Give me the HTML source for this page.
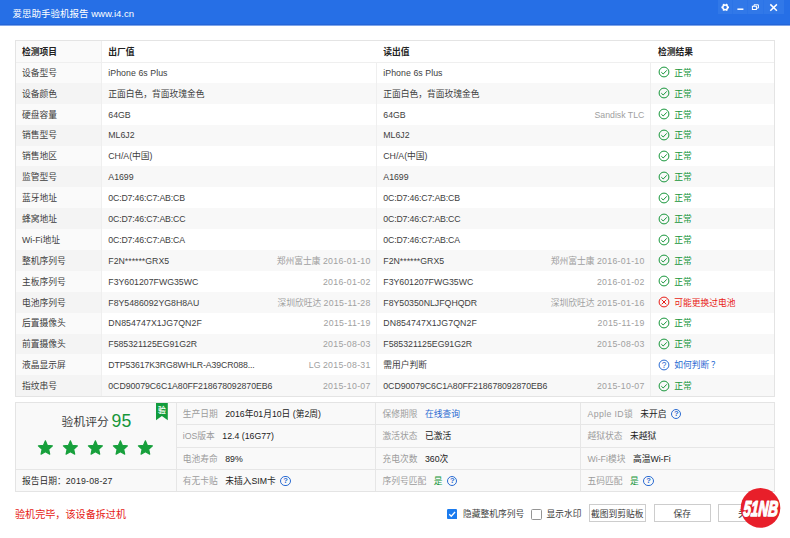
<!DOCTYPE html>
<html lang="zh-CN"><head><meta charset="utf-8"><title>爱思助手验机报告</title><style>
html,body{margin:0;padding:0}
body{width:790px;height:538px;overflow:hidden;background:#fff;position:relative;font-family:"Liberation Sans","Noto Sans CJK SC",sans-serif;font-size:8.75px;color:#3e3e3e}
body>div,body>span,body>svg{position:absolute;display:block;white-space:nowrap}
.b{font-weight:bold;color:#222}
.g{color:#a0a0a0}
.d{letter-spacing:0.3px;margin-right:-0.3px}
.g2{color:#9c9c9c;margin-right:7.5px}
.v{color:#222}
.ttl{color:#fff;font-size:9.5px}
.q{display:inline-block;box-sizing:border-box;width:10.4px;height:10.4px;border:1px solid #2a6bd2;border-radius:50%;color:#2a6bd2;font-style:normal;font-weight:bold;font-size:7.6px;line-height:8.6px;text-align:center;margin-left:4.6px;vertical-align:1.2px}
.btn{box-sizing:border-box;border:1px solid #cdcdcd;background:#fff;text-align:center;color:#333}
</style></head><body>
<div style="left:0.00px;top:0.00px;width:790.00px;height:24.00px;background:#266fe6;"></div>
<div style="left:0.00px;top:24.00px;width:790.00px;height:1.00px;background:#2465d8;"></div>
<div style="left:0.00px;top:25.00px;width:790.00px;height:1.00px;background:#7ea5ea;"></div>
<div style="left:718.00px;top:0.00px;width:66.00px;height:14.00px;background:#3178e8;"></div>
<div style="left:732.00px;top:0.00px;width:1.00px;height:14.00px;background:#2c74e7;"></div>
<div style="left:747.00px;top:0.00px;width:1.00px;height:14.00px;background:#2c74e7;"></div>
<div style="left:763.00px;top:0.00px;width:1.00px;height:14.00px;background:#2c74e7;"></div>
<span class="ttl" style="left:12.60px;top:7.00px;height:14px;line-height:14px;">爱思助手验机报告 www.i4.cn</span>
<svg style="left:718px;top:0;width:66px;height:14px" viewBox="0 0 66 14">
<g fill="none" stroke="#fff" stroke-linecap="butt">
<circle cx="7.2" cy="7.3" r="2.4" stroke-width="1.5"/>
<g stroke-width="1.7" transform="rotate(30 7.2 7.3)"><path d="M7.2 3.5v1.3M7.2 9.8v1.3M3.9 5.4l1.2.7M9.3 8.5l1.2.7M3.9 9.2l1.2-.7M9.3 6.1l1.2-.7"/></g>
<path d="M19.4 9.2h6" stroke-width="1.5"/>
<rect x="34.4" y="6.3" width="4" height="3.2" stroke-width="1"/>
<path d="M36 6.2V4.8h4.4v3.3h-1.9" stroke-width="1"/>
<path d="M52.3 4.4l6.6 6.4M58.9 4.4L52.3 10.8" stroke-width="1.5"/>
</g></svg>
<div style="left:15.30px;top:40.50px;width:759.40px;height:355.70px;background:#fff;"></div>
<div style="left:15.30px;top:40.50px;width:86.30px;height:21.50px;background:#fafafa;"></div>
<div style="left:15.30px;top:62.00px;width:86.30px;height:20.89px;background:#fafafa;"></div>
<div style="left:15.30px;top:82.89px;width:759.40px;height:20.89px;background:#f8f8f8;"></div>
<div style="left:15.30px;top:82.89px;width:86.30px;height:20.89px;background:#f4f4f4;"></div>
<div style="left:15.30px;top:103.78px;width:86.30px;height:20.89px;background:#fafafa;"></div>
<div style="left:15.30px;top:124.66px;width:759.40px;height:20.89px;background:#f8f8f8;"></div>
<div style="left:15.30px;top:124.66px;width:86.30px;height:20.89px;background:#f4f4f4;"></div>
<div style="left:15.30px;top:145.55px;width:86.30px;height:20.89px;background:#fafafa;"></div>
<div style="left:15.30px;top:166.44px;width:759.40px;height:20.89px;background:#f8f8f8;"></div>
<div style="left:15.30px;top:166.44px;width:86.30px;height:20.89px;background:#f4f4f4;"></div>
<div style="left:15.30px;top:187.32px;width:86.30px;height:20.89px;background:#fafafa;"></div>
<div style="left:15.30px;top:208.21px;width:759.40px;height:20.89px;background:#f8f8f8;"></div>
<div style="left:15.30px;top:208.21px;width:86.30px;height:20.89px;background:#f4f4f4;"></div>
<div style="left:15.30px;top:229.10px;width:86.30px;height:20.89px;background:#fafafa;"></div>
<div style="left:15.30px;top:249.99px;width:759.40px;height:20.89px;background:#f8f8f8;"></div>
<div style="left:15.30px;top:249.99px;width:86.30px;height:20.89px;background:#f4f4f4;"></div>
<div style="left:15.30px;top:270.88px;width:86.30px;height:20.89px;background:#fafafa;"></div>
<div style="left:15.30px;top:291.76px;width:759.40px;height:20.89px;background:#f8f8f8;"></div>
<div style="left:15.30px;top:291.76px;width:86.30px;height:20.89px;background:#f4f4f4;"></div>
<div style="left:15.30px;top:312.65px;width:86.30px;height:20.89px;background:#fafafa;"></div>
<div style="left:15.30px;top:333.54px;width:759.40px;height:20.89px;background:#f8f8f8;"></div>
<div style="left:15.30px;top:333.54px;width:86.30px;height:20.89px;background:#f4f4f4;"></div>
<div style="left:15.30px;top:354.43px;width:86.30px;height:20.89px;background:#fafafa;"></div>
<div style="left:15.30px;top:375.31px;width:759.40px;height:20.89px;background:#f8f8f8;"></div>
<div style="left:15.30px;top:375.31px;width:86.30px;height:20.89px;background:#f4f4f4;"></div>
<div style="left:15.30px;top:61.50px;width:759.40px;height:1.00px;background:#efefef;"></div>
<div style="left:101.10px;top:40.50px;width:1.00px;height:355.70px;background:#efefef;"></div>
<div style="left:375.50px;top:62.00px;width:1.00px;height:334.20px;background:#efefef;"></div>
<div style="left:650.30px;top:62.00px;width:1.00px;height:334.20px;background:#efefef;"></div>
<div style="left:14.80px;top:40.00px;width:760.40px;height:1.00px;background:#e4e4e4;"></div>
<div style="left:14.80px;top:395.70px;width:760.40px;height:1.00px;background:#e4e4e4;"></div>
<div style="left:14.80px;top:40.50px;width:1.00px;height:355.70px;background:#e4e4e4;"></div>
<div style="left:774.20px;top:40.50px;width:1.00px;height:355.70px;background:#e4e4e4;"></div>
<span class="b" style="left:22.10px;top:45.00px;height:14px;line-height:14px;">检测项目</span>
<span class="b" style="left:108.30px;top:45.00px;height:14px;line-height:14px;">出厂值</span>
<span class="b" style="left:383.30px;top:45.00px;height:14px;line-height:14px;">读出值</span>
<span class="b" style="left:658.00px;top:45.00px;height:14px;line-height:14px;">检测结果</span>
<span style="left:22.10px;top:66.00px;height:14px;line-height:14px;">设备型号</span>
<span style="left:108.30px;top:66.00px;height:14px;line-height:14px;letter-spacing:0.06px">iPhone 6s Plus</span>
<span style="left:383.30px;top:66.00px;height:14px;line-height:14px;letter-spacing:0.06px">iPhone 6s Plus</span>
<svg style="left:658.30px;top:66.44px;width:12px;height:12px" viewBox="-6 -6 12 12"><g fill="none" stroke="#16963a" stroke-width="1"><circle r="4.9"/><path d="M-2.7 0.2L-0.8 2.0L2.8 -1.7" /></g></svg>
<span style="left:674.30px;top:66.00px;height:14px;line-height:14px;color:#16963a">正常</span>
<span style="left:22.10px;top:87.00px;height:14px;line-height:14px;">设备颜色</span>
<span style="left:108.30px;top:87.00px;height:14px;line-height:14px;">正面白色，背面玫瑰金色</span>
<span style="left:383.30px;top:87.00px;height:14px;line-height:14px;">正面白色，背面玫瑰金色</span>
<svg style="left:658.30px;top:87.33px;width:12px;height:12px" viewBox="-6 -6 12 12"><g fill="none" stroke="#16963a" stroke-width="1"><circle r="4.9"/><path d="M-2.7 0.2L-0.8 2.0L2.8 -1.7" /></g></svg>
<span style="left:674.30px;top:87.00px;height:14px;line-height:14px;color:#16963a">正常</span>
<span style="left:22.10px;top:108.00px;height:14px;line-height:14px;">硬盘容量</span>
<span style="left:108.30px;top:108.00px;height:14px;line-height:14px;">64GB</span>
<span style="left:383.30px;top:108.00px;height:14px;line-height:14px;">64GB</span>
<span class="g" style="right:145.60px;top:108.00px;height:14px;line-height:14px;">Sandisk TLC</span>
<svg style="left:658.30px;top:108.22px;width:12px;height:12px" viewBox="-6 -6 12 12"><g fill="none" stroke="#16963a" stroke-width="1"><circle r="4.9"/><path d="M-2.7 0.2L-0.8 2.0L2.8 -1.7" /></g></svg>
<span style="left:674.30px;top:108.00px;height:14px;line-height:14px;color:#16963a">正常</span>
<span style="left:22.10px;top:128.00px;height:14px;line-height:14px;">销售型号</span>
<span style="left:108.30px;top:128.00px;height:14px;line-height:14px;">ML6J2</span>
<span style="left:383.30px;top:128.00px;height:14px;line-height:14px;">ML6J2</span>
<svg style="left:658.30px;top:129.11px;width:12px;height:12px" viewBox="-6 -6 12 12"><g fill="none" stroke="#16963a" stroke-width="1"><circle r="4.9"/><path d="M-2.7 0.2L-0.8 2.0L2.8 -1.7" /></g></svg>
<span style="left:674.30px;top:128.00px;height:14px;line-height:14px;color:#16963a">正常</span>
<span style="left:22.10px;top:149.00px;height:14px;line-height:14px;">销售地区</span>
<span style="left:108.30px;top:149.00px;height:14px;line-height:14px;">CH/A(中国)</span>
<span style="left:383.30px;top:149.00px;height:14px;line-height:14px;">CH/A(中国)</span>
<svg style="left:658.30px;top:149.99px;width:12px;height:12px" viewBox="-6 -6 12 12"><g fill="none" stroke="#16963a" stroke-width="1"><circle r="4.9"/><path d="M-2.7 0.2L-0.8 2.0L2.8 -1.7" /></g></svg>
<span style="left:674.30px;top:149.00px;height:14px;line-height:14px;color:#16963a">正常</span>
<span style="left:22.10px;top:170.00px;height:14px;line-height:14px;">监管型号</span>
<span style="left:108.30px;top:170.00px;height:14px;line-height:14px;">A1699</span>
<span style="left:383.30px;top:170.00px;height:14px;line-height:14px;">A1699</span>
<svg style="left:658.30px;top:170.88px;width:12px;height:12px" viewBox="-6 -6 12 12"><g fill="none" stroke="#16963a" stroke-width="1"><circle r="4.9"/><path d="M-2.7 0.2L-0.8 2.0L2.8 -1.7" /></g></svg>
<span style="left:674.30px;top:170.00px;height:14px;line-height:14px;color:#16963a">正常</span>
<span style="left:22.10px;top:191.00px;height:14px;line-height:14px;">蓝牙地址</span>
<span style="left:108.30px;top:191.00px;height:14px;line-height:14px;letter-spacing:-0.16px">0C:D7:46:C7:AB:CB</span>
<span style="left:383.30px;top:191.00px;height:14px;line-height:14px;letter-spacing:-0.16px">0C:D7:46:C7:AB:CB</span>
<svg style="left:658.30px;top:191.77px;width:12px;height:12px" viewBox="-6 -6 12 12"><g fill="none" stroke="#16963a" stroke-width="1"><circle r="4.9"/><path d="M-2.7 0.2L-0.8 2.0L2.8 -1.7" /></g></svg>
<span style="left:674.30px;top:191.00px;height:14px;line-height:14px;color:#16963a">正常</span>
<span style="left:22.10px;top:212.00px;height:14px;line-height:14px;">蜂窝地址</span>
<span style="left:108.30px;top:212.00px;height:14px;line-height:14px;letter-spacing:-0.16px">0C:D7:46:C7:AB:CC</span>
<span style="left:383.30px;top:212.00px;height:14px;line-height:14px;letter-spacing:-0.16px">0C:D7:46:C7:AB:CC</span>
<svg style="left:658.30px;top:212.66px;width:12px;height:12px" viewBox="-6 -6 12 12"><g fill="none" stroke="#16963a" stroke-width="1"><circle r="4.9"/><path d="M-2.7 0.2L-0.8 2.0L2.8 -1.7" /></g></svg>
<span style="left:674.30px;top:212.00px;height:14px;line-height:14px;color:#16963a">正常</span>
<span style="left:22.10px;top:233.00px;height:14px;line-height:14px;">Wi-Fi地址</span>
<span style="left:108.30px;top:233.00px;height:14px;line-height:14px;letter-spacing:-0.16px">0C:D7:46:C7:AB:CA</span>
<span style="left:383.30px;top:233.00px;height:14px;line-height:14px;letter-spacing:-0.16px">0C:D7:46:C7:AB:CA</span>
<svg style="left:658.30px;top:233.54px;width:12px;height:12px" viewBox="-6 -6 12 12"><g fill="none" stroke="#16963a" stroke-width="1"><circle r="4.9"/><path d="M-2.7 0.2L-0.8 2.0L2.8 -1.7" /></g></svg>
<span style="left:674.30px;top:233.00px;height:14px;line-height:14px;color:#16963a">正常</span>
<span style="left:22.10px;top:254.00px;height:14px;line-height:14px;">整机序列号</span>
<span style="left:108.30px;top:254.00px;height:14px;line-height:14px;">F2N******GRX5</span>
<span class="g" style="right:419.60px;top:254.00px;height:14px;line-height:14px;">郑州富士康 <span class="d">2016-01-10</span></span>
<span style="left:383.30px;top:254.00px;height:14px;line-height:14px;">F2N******GRX5</span>
<span class="g" style="right:145.60px;top:254.00px;height:14px;line-height:14px;">郑州富士康 <span class="d">2016-01-10</span></span>
<svg style="left:658.30px;top:254.43px;width:12px;height:12px" viewBox="-6 -6 12 12"><g fill="none" stroke="#16963a" stroke-width="1"><circle r="4.9"/><path d="M-2.7 0.2L-0.8 2.0L2.8 -1.7" /></g></svg>
<span style="left:674.30px;top:254.00px;height:14px;line-height:14px;color:#16963a">正常</span>
<span style="left:22.10px;top:275.00px;height:14px;line-height:14px;">主板序列号</span>
<span style="left:108.30px;top:275.00px;height:14px;line-height:14px;">F3Y601207FWG35WC</span>
<span class="g" style="right:419.60px;top:275.00px;height:14px;line-height:14px;"><span class="d">2016-01-02</span></span>
<span style="left:383.30px;top:275.00px;height:14px;line-height:14px;">F3Y601207FWG35WC</span>
<span class="g" style="right:145.60px;top:275.00px;height:14px;line-height:14px;"><span class="d">2016-01-02</span></span>
<svg style="left:658.30px;top:275.32px;width:12px;height:12px" viewBox="-6 -6 12 12"><g fill="none" stroke="#16963a" stroke-width="1"><circle r="4.9"/><path d="M-2.7 0.2L-0.8 2.0L2.8 -1.7" /></g></svg>
<span style="left:674.30px;top:275.00px;height:14px;line-height:14px;color:#16963a">正常</span>
<span style="left:22.10px;top:296.00px;height:14px;line-height:14px;">电池序列号</span>
<span style="left:108.30px;top:296.00px;height:14px;line-height:14px;">F8Y5486092YG8H8AU</span>
<span class="g" style="right:419.60px;top:296.00px;height:14px;line-height:14px;">深圳欣旺达 <span class="d">2015-11-28</span></span>
<span style="left:383.30px;top:296.00px;height:14px;line-height:14px;">F8Y50350NLJFQHQDR</span>
<span class="g" style="right:145.60px;top:296.00px;height:14px;line-height:14px;">深圳欣旺达 <span class="d">2015-01-16</span></span>
<svg style="left:658.30px;top:296.21px;width:12px;height:12px" viewBox="-6 -6 12 12"><g fill="none" stroke="#e81c16" stroke-width="1"><circle r="4.9"/><path d="M-2.3 -2.3L2.3 2.3M2.3 -2.3L-2.3 2.3"/></g></svg>
<span style="left:674.30px;top:296.00px;height:14px;line-height:14px;color:#e81c16">可能更换过电池</span>
<span style="left:22.10px;top:316.00px;height:14px;line-height:14px;">后置摄像头</span>
<span style="left:108.30px;top:316.00px;height:14px;line-height:14px;letter-spacing:0.1px">DN854747X1JG7QN2F</span>
<span class="g" style="right:419.60px;top:316.00px;height:14px;line-height:14px;"><span class="d">2015-11-19</span></span>
<span style="left:383.30px;top:316.00px;height:14px;line-height:14px;letter-spacing:0.1px">DN854747X1JG7QN2F</span>
<span class="g" style="right:145.60px;top:316.00px;height:14px;line-height:14px;"><span class="d">2015-11-19</span></span>
<svg style="left:658.30px;top:317.09px;width:12px;height:12px" viewBox="-6 -6 12 12"><g fill="none" stroke="#16963a" stroke-width="1"><circle r="4.9"/><path d="M-2.7 0.2L-0.8 2.0L2.8 -1.7" /></g></svg>
<span style="left:674.30px;top:316.00px;height:14px;line-height:14px;color:#16963a">正常</span>
<span style="left:22.10px;top:337.00px;height:14px;line-height:14px;">前置摄像头</span>
<span style="left:108.30px;top:337.00px;height:14px;line-height:14px;">F585321125EG91G2R</span>
<span class="g" style="right:419.60px;top:337.00px;height:14px;line-height:14px;"><span class="d">2015-08-03</span></span>
<span style="left:383.30px;top:337.00px;height:14px;line-height:14px;">F585321125EG91G2R</span>
<span class="g" style="right:145.60px;top:337.00px;height:14px;line-height:14px;"><span class="d">2015-08-03</span></span>
<svg style="left:658.30px;top:337.98px;width:12px;height:12px" viewBox="-6 -6 12 12"><g fill="none" stroke="#16963a" stroke-width="1"><circle r="4.9"/><path d="M-2.7 0.2L-0.8 2.0L2.8 -1.7" /></g></svg>
<span style="left:674.30px;top:337.00px;height:14px;line-height:14px;color:#16963a">正常</span>
<span style="left:22.10px;top:358.00px;height:14px;line-height:14px;">液晶显示屏</span>
<span style="left:108.30px;top:358.00px;height:14px;line-height:14px;letter-spacing:-0.1px">DTP53617K3RG8WHLR-A39CR088...</span>
<span class="g" style="right:419.60px;top:358.00px;height:14px;line-height:14px;">LG <span class="d">2015-08-31</span></span>
<span style="left:383.30px;top:358.00px;height:14px;line-height:14px;">需用户判断</span>
<svg style="left:658.30px;top:358.87px;width:12px;height:12px" viewBox="-6 -6 12 12"><g fill="none" stroke="#2a6bd2" stroke-width="1"><circle r="4.9"/><text x="0" y="2.9" text-anchor="middle" font-size="8.2" fill="#2a6bd2" stroke="none" font-family="Liberation Sans, sans-serif">?</text></g></svg>
<span style="left:674.30px;top:358.00px;height:14px;line-height:14px;color:#2a6bd2">如何判断<span style="margin-left:1.6px">？</span></span>
<span style="left:22.10px;top:379.00px;height:14px;line-height:14px;">指纹串号</span>
<span style="left:108.30px;top:379.00px;height:14px;line-height:14px;letter-spacing:-0.04px">0CD90079C6C1A80FF218678092870EB6</span>
<span class="g" style="right:419.60px;top:379.00px;height:14px;line-height:14px;"><span class="d">2015-10-07</span></span>
<span style="left:383.30px;top:379.00px;height:14px;line-height:14px;letter-spacing:-0.04px">0CD90079C6C1A80FF218678092870EB6</span>
<span class="g" style="right:145.60px;top:379.00px;height:14px;line-height:14px;"><span class="d">2015-10-07</span></span>
<svg style="left:658.30px;top:379.76px;width:12px;height:12px" viewBox="-6 -6 12 12"><g fill="none" stroke="#16963a" stroke-width="1"><circle r="4.9"/><path d="M-2.7 0.2L-0.8 2.0L2.8 -1.7" /></g></svg>
<span style="left:674.30px;top:379.00px;height:14px;line-height:14px;color:#16963a">正常</span>
<div style="left:15.30px;top:402.60px;width:759.40px;height:89.00px;background:#f9f9f9;"></div>
<div style="left:176.20px;top:424.35px;width:598.50px;height:1.00px;background:#e6e6e6;"></div>
<div style="left:176.20px;top:446.60px;width:598.50px;height:1.00px;background:#e6e6e6;"></div>
<div style="left:15.30px;top:468.85px;width:759.40px;height:1.00px;background:#e6e6e6;"></div>
<div style="left:175.70px;top:402.60px;width:1.00px;height:89.00px;background:#e6e6e6;"></div>
<div style="left:375.20px;top:402.60px;width:1.00px;height:89.00px;background:#e6e6e6;"></div>
<div style="left:579.90px;top:402.60px;width:1.00px;height:89.00px;background:#e6e6e6;"></div>
<div style="left:14.80px;top:402.10px;width:760.40px;height:1.00px;background:#e4e4e4;"></div>
<div style="left:14.80px;top:491.10px;width:760.40px;height:1.00px;background:#e4e4e4;"></div>
<div style="left:14.80px;top:402.60px;width:1.00px;height:89.00px;background:#e4e4e4;"></div>
<div style="left:774.20px;top:402.60px;width:1.00px;height:89.00px;background:#e4e4e4;"></div>
<svg style="left:156px;top:402.60px;width:12px;height:18px" viewBox="0 0 12 18"><path d="M0 0H11.8V17.2L5.9 13.0L0 17.2Z" fill="#129c3c"/></svg>
<span style="left:158.10px;top:404.00px;height:14px;line-height:14px;color:#fff;font-size:7.8px;font-weight:bold">验</span>
<span style="left:61.60px;top:413.00px;height:18px;line-height:18px;font-size:11.8px;color:#3c3c3c">验机评分</span>
<span style="left:111.60px;top:410.00px;height:22px;line-height:22px;font-size:17.6px;color:#16963a">95</span>
<svg style="left:0;top:0;width:790px;height:538px;pointer-events:none" viewBox="0 0 790 538"><g fill="#17a03c" stroke="#17a03c" stroke-width="1.1" stroke-linejoin="round"><polygon points="45.40,440.80 47.44,445.39 52.44,445.91 48.71,449.27 49.75,454.19 45.40,451.68 41.05,454.19 42.09,449.27 38.36,445.91 43.36,445.39"/><polygon points="70.40,440.80 72.44,445.39 77.44,445.91 73.71,449.27 74.75,454.19 70.40,451.68 66.05,454.19 67.09,449.27 63.36,445.91 68.36,445.39"/><polygon points="95.40,440.80 97.44,445.39 102.44,445.91 98.71,449.27 99.75,454.19 95.40,451.68 91.05,454.19 92.09,449.27 88.36,445.91 93.36,445.39"/><polygon points="120.40,440.80 122.44,445.39 127.44,445.91 123.71,449.27 124.75,454.19 120.40,451.68 116.05,454.19 117.09,449.27 113.36,445.91 118.36,445.39"/><polygon points="145.40,440.80 147.44,445.39 152.44,445.91 148.71,449.27 149.75,454.19 145.40,451.68 141.05,454.19 142.09,449.27 138.36,445.91 143.36,445.39"/></g></svg>
<span style="left:22.00px;top:474.00px;height:14px;line-height:14px;color:#2a2a2a">报告日期：<span style="letter-spacing:.22px">2019-08-27</span></span>
<span style="left:182.70px;top:407.00px;height:14px;line-height:14px;"><span class="g2">生产日期</span><span class="v" style="">2016年01月10日 (第2周)</span></span>
<span style="left:182.70px;top:429.00px;height:14px;line-height:14px;"><span class="g2">iOS版本</span><span class="v" style="">12.4 (16G77)</span></span>
<span style="left:182.70px;top:452.00px;height:14px;line-height:14px;"><span class="g2">电池寿命</span><span class="v" style="">89%</span></span>
<span style="left:182.70px;top:474.00px;height:14px;line-height:14px;"><span class="g2">有无卡贴</span><span class="v" style="">未插入SIM卡</span><i class="q">?</i></span>
<span style="left:382.50px;top:407.00px;height:14px;line-height:14px;"><span class="g2">保修期限</span><span class="v" style="color:#2a6bd2">在线查询</span></span>
<span style="left:382.50px;top:429.00px;height:14px;line-height:14px;"><span class="g2">激活状态</span><span class="v" style="">已激活</span></span>
<span style="left:382.50px;top:452.00px;height:14px;line-height:14px;"><span class="g2">充电次数</span><span class="v" style="">360次</span></span>
<span style="left:382.50px;top:474.00px;height:14px;line-height:14px;"><span class="g2">序列号匹配</span><span class="v" style="color:#16963a">是</span><i class="q">?</i></span>
<span style="left:587.50px;top:407.00px;height:14px;line-height:14px;"><span class="g2"><span style="letter-spacing:.36px">Apple ID</span>锁</span><span class="v" style="">未开启</span><i class="q">?</i></span>
<span style="left:587.50px;top:429.00px;height:14px;line-height:14px;"><span class="g2">越狱状态</span><span class="v" style="">未越狱</span></span>
<span style="left:587.50px;top:452.00px;height:14px;line-height:14px;"><span class="g2">Wi-Fi模块</span><span class="v" style="">高温Wi-Fi</span></span>
<span style="left:587.50px;top:474.00px;height:14px;line-height:14px;"><span class="g2">五码匹配</span><span class="v" style="color:#16963a">是</span><i class="q">?</i></span>
<span style="left:15.00px;top:507.00px;height:16px;line-height:16px;color:#e61a15;font-size:10.1px">验机完毕，该设备拆过机</span>
<svg style="left:447.2px;top:508.8px;width:10.2px;height:10.2px" viewBox="0 0 10 10"><rect width="10" height="10" rx="1.3" fill="#1b7bee"/><path d="M2.2 5.1L4.2 7.1L7.9 3" fill="none" stroke="#fff" stroke-width="1.3"/></svg>
<span style="left:462.90px;top:507.00px;height:14px;line-height:14px;">隐藏整机序列号</span>
<div style="left:531.3px;top:508.8px;width:9.2px;height:9.2px;border:0.9px solid #959595;border-radius:1.6px;background:#fff;box-sizing:content-box"></div>
<span style="left:546.50px;top:507.00px;height:14px;line-height:14px;">显示水印</span>
<div class="btn" style="left:588.80px;top:504.2px;width:57.10px;height:18.2px"></div>
<span style="left:588.80px;top:507.00px;height:14px;line-height:14px;width:57.10px;text-align:center;color:#3a3a3a">截图到剪贴板</span>
<div class="btn" style="left:653.60px;top:504.2px;width:57.20px;height:18.2px"></div>
<span style="left:653.60px;top:507.00px;height:14px;line-height:14px;width:57.20px;text-align:center;color:#3a3a3a">保存</span>
<div class="btn" style="left:718.30px;top:504.2px;width:57.10px;height:18.2px"></div>
<span style="left:718.30px;top:507.00px;height:14px;line-height:14px;width:57.10px;text-align:center;color:#3a3a3a">关闭</span>
<svg style="left:738px;top:485px;width:46px;height:46px" viewBox="738 485 46 46"><circle cx="760.5" cy="507.9" r="19.8" fill="#e81f2a"/><g font-family="Liberation Sans, sans-serif" font-weight="bold" font-style="italic" font-size="21.5" fill="#fff" stroke-linejoin="round" transform="translate(760.2 516) scale(0.630 1) skewX(-7)"><text x="-27.48" y="0" stroke="#d81c26" stroke-width="2.6">5</text><text x="-27.48" y="0" stroke="#fff" stroke-width="1.5">5</text><text x="-15.52" y="0" stroke="#d81c26" stroke-width="2.6">1</text><text x="-15.52" y="0" stroke="#fff" stroke-width="1.5">1</text><text x="-3.57" y="0" stroke="#d81c26" stroke-width="2.6">N</text><text x="-3.57" y="0" stroke="#fff" stroke-width="1.5">N</text><text x="11.95" y="0" stroke="#d81c26" stroke-width="2.6">B</text><text x="11.95" y="0" stroke="#fff" stroke-width="1.5">B</text></g></svg>
</body></html>
